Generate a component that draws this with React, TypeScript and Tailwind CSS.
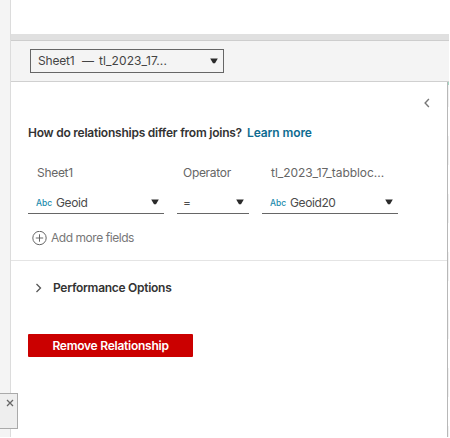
import type { ReactNode } from "react";

function Caret() {
  return (
    <svg width="8" height="6" viewBox="0 0 8 6" className="shrink-0">
      <path d="M0.2 0.6h7.6L5 5.2H3z" fill="#2b2b2b" />
    </svg>
  );
}

function Field({ width, label, children }: { width: string; label: ReactNode; children: ReactNode }) {
  return (
    <div className={width}>
      <div className="h-[18px] pl-[9px] leading-[18px] text-[#666]">{label}</div>
      <div className="mt-[9px] flex h-[23px] items-center justify-between border-b border-[#666] pr-[5px] pl-[7px] text-[#4b4b4b]">
        <div className="flex h-[24px] items-center pt-px">{children}</div>
        <Caret />
      </div>
    </div>
  );
}

function Abc() {
  return <span className="mt-px ml-px w-5 text-[8.5px] font-medium text-[#1c8bad]">Abc</span>;
}

export default function App() {
  return (
    <div className="relative flex h-[438px] w-[450px] overflow-hidden bg-white pr-px pb-px font-['Inter',sans-serif] text-[12px] whitespace-nowrap">
      <aside className="w-[11px] shrink-0 border-r border-[#dcdcdc] bg-[#f4f4f4]" />
      <main className="flex min-w-0 flex-1 flex-col">
        <div className="h-[34px] shrink-0" />
        <div className="h-[7px] shrink-0 border-b border-[#cdcdcd] bg-[#e0e0e0]" />
        <header className="h-[41px] shrink-0 border-b border-[#d0d0d0] bg-[#f4f4f4] pt-2 pl-[19px]">
          <div className="flex h-6 w-[194px] items-center justify-between border border-[#666] pr-[5px] pl-[7px] text-[#444]">
            <div className="flex items-center">
              <span className="w-[44px] tracking-[-0.2px]">Sheet1</span>
              <span className="w-[17px]">—</span>
              <span className="tracking-[0.1px]">tl_2023_17...</span>
            </div>
            <Caret />
          </div>
        </header>
        <div className="flex min-h-0 flex-1">
          <section className="w-[437px] border-r border-[#b8b8b8]">
            <div className="flex h-[42px] items-center justify-end pr-[17px]">
              <svg width="7" height="10" viewBox="0 0 7 10" fill="none">
                <path d="M5.9 1L2.1 5l3.8 4" stroke="#777" strokeWidth="1.4" />
              </svg>
            </div>
            <p className="flex h-[18px] pl-[17px] leading-[18px] font-semibold text-[#333]">
              <span className="w-[219px] tracking-[-0.24px]">How do relationships differ from joins?</span>
              <a className="tracking-[-0.1px] text-[#0e6c91]">Learn more</a>
            </p>
            <div className="mt-[22px] flex gap-[13px] pl-[17px]">
              <Field width="w-[136px]" label={<span className="tracking-[-0.3px]">Sheet1</span>}>
                <Abc />
                <span className="tracking-[-0.4px]">Geoid</span>
              </Field>
              <Field width="w-[72px]" label={<span className="-ml-[3px] tracking-[-0.3px]">Operator</span>}>
                <span className="-ml-px">=</span>
              </Field>
              <Field width="w-[136px]" label={<span className="tracking-[-0.05px]">tl_2023_17_tabbloc...</span>}>
                <Abc />
                <span className="tracking-[-0.4px]">Geoid20</span>
              </Field>
            </div>
            <div className="mt-[15px] flex h-[18px] items-center pl-[21px] text-[#777]">
              <svg width="15" height="15" viewBox="0 0 15 15" fill="none" className="mr-[4px]">
                <circle cx="7.5" cy="7" r="6.7" stroke="#666" strokeWidth="1" />
                <path d="M7.5 3.3v7.4M3.8 7h7.4" stroke="#666" />
              </svg>
              <span className="tracking-[-0.45px]">Add more fields</span>
            </div>
            <div className="mt-[13px] flex h-[56px] items-center border-t border-[#e4e4e4] pb-[2px] pl-[24px]">
              <svg width="7" height="10" viewBox="0 0 7 10" fill="none" className="mr-[11px]">
                <path d="M1.5 1l4 4-4 4" stroke="#555" strokeWidth="1.3" />
              </svg>
              <span className="font-semibold tracking-[-0.28px] text-[#333]">Performance Options</span>
            </div>
            <button className="mt-[18px] ml-[17px] h-[23px] w-[165px] rounded-[1px] bg-[#cb0000] font-semibold tracking-[-0.25px] text-white">
              Remove Relationship
            </button>
          </section>
          <div className="flex-1 bg-[repeating-linear-gradient(to_bottom,#f2f2f2_0px,#f2f2f2_29px,#ffffff_29px,#ffffff_58px)] bg-[position:0_-4px]">
            <div className="h-[3px] bg-[#a5d8c5]" />
          </div>
        </div>
      </main>
      <div className="absolute top-[393px] left-0 flex h-[36px] w-[18px] justify-end border border-l-0 border-[#aaa] bg-[#eeeeee] pt-[5px] pr-[3px]">
        <svg width="8" height="8" viewBox="0 0 8 8">
          <path d="M1 1l6 6M7 1L1 7" stroke="#666" strokeWidth="1.3" />
        </svg>
      </div>
    </div>
  );
}
